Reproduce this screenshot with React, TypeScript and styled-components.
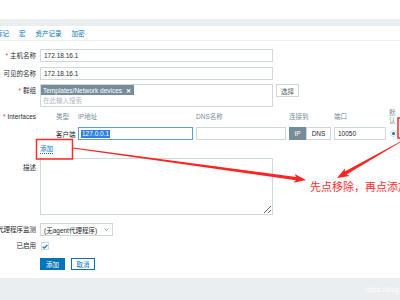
import React from "react";
import styled, { createGlobalStyle } from "styled-components";

const GlobalStyle = createGlobalStyle`
  html, body {
    margin: 0;
    padding: 0;
    background: #fff;
  }
  body {
    font-family: "Liberation Sans", "Noto Sans CJK SC", sans-serif;
    font-size: 6.5px;
    color: #1f2c33;
  }
`;

const Page = styled.div`
  position: relative;
  width: 400px;
  height: 300px;
  overflow: hidden;
  display: flex;
  flex-direction: column;
`;

const TopSpace = styled.div`
  height: 19px;
  flex-shrink: 0;
`;

const Band = styled.div`
  height: 7px;
  background: #ebeef0;
  flex-shrink: 0;
`;

const Tabs = styled.div`
  display: flex;
  align-items: center;
  gap: 10px;
  height: 15px;
  box-sizing: border-box;
  border-bottom: 1px solid #ebeef0;
  margin-left: -4px;
  flex-shrink: 0;
`;

const Tab = styled.span`
  color: #0275b8;
  white-space: nowrap;
`;

const Form = styled.div`
  display: flex;
  flex-direction: column;
  padding-top: 8px;
  margin-left: -24px;
  flex-shrink: 0;
`;

const Row = styled.div<{ $top?: number }>`
  display: grid;
  grid-template-columns: 60px auto;
  column-gap: 4px;
  align-items: start;
  margin-top: ${(p) => p.$top ?? 0}px;
`;

const Label = styled.div<{ $lh?: number; $pad?: number }>`
  text-align: right;
  white-space: nowrap;
  line-height: ${(p) => p.$lh ?? 13}px;
  padding-top: ${(p) => p.$pad ?? 0}px;
`;

const Req = styled.span`
  color: #e33734;
  margin-right: 2px;
`;

const TextField = styled.div<{ $w: number; $focus?: boolean }>`
  width: ${(p) => p.$w}px;
  height: 13px;
  box-sizing: border-box;
  border: 1px solid ${(p) => (p.$focus ? "#5c9fd6" : "#cfd8dc")};
  padding: 0 3px;
  display: flex;
  align-items: center;
  background: #fff;
  white-space: nowrap;
  overflow: hidden;
`;

const Selected = styled.span`
  background: #2f80e3;
  color: #fff;
  line-height: 8px;
  padding: 0 1px;
  margin-left: -1px;
`;

const GroupLine = styled.div`
  display: flex;
  align-items: flex-start;
  gap: 3px;
`;

const MultiSelect = styled.div`
  width: 233px;
  height: 23px;
  box-sizing: border-box;
  border: 1px solid #cfd8dc;
  display: flex;
  flex-direction: column;
  align-items: flex-start;
`;

const TagChip = styled.span`
  display: inline-flex;
  align-items: center;
  gap: 4px;
  height: 10px;
  padding: 0 3px 0 2px;
  background: #768d99;
  color: #fff;
  white-space: nowrap;
`;

const TagClose = styled.span`
  font-size: 6px;
  font-weight: bold;
`;

const Placeholder = styled.span`
  color: #acbbc2;
  line-height: 10px;
  padding-left: 2px;
  margin-top: 1px;
`;

const GreyButton = styled.div`
  width: 23px;
  height: 13px;
  box-sizing: border-box;
  border: 1px solid #cfd8dc;
  color: #4f5f67;
  display: flex;
  align-items: center;
  justify-content: center;
`;

const IfaceBlock = styled.div`
  display: flex;
  flex-direction: column;
  align-items: flex-start;
`;

const IfaceGrid = styled.div`
  display: grid;
  grid-template-columns: 13px 19px 115px 90px 42px 52px 10px;
  grid-template-rows: 16px 13px;
  column-gap: 3px;
  row-gap: 2px;
  align-items: center;
`;

const Head = styled.div`
  color: #768d99;
  line-height: 8px;
  white-space: normal;
`;

const TypeCell = styled.div`
  text-align: right;
  white-space: nowrap;
`;

const Toggle = styled.div`
  display: flex;
  height: 13px;
`;

const ToggleItem = styled.div<{ $on?: boolean; $w: number }>`
  width: ${(p) => p.$w}px;
  box-sizing: border-box;
  border: 1px solid ${(p) => (p.$on ? "#768d99" : "#cfd8dc")};
  background: ${(p) => (p.$on ? "#768d99" : "#fff")};
  color: ${(p) => (p.$on ? "#fff" : "#1f2c33")};
  display: flex;
  align-items: center;
  justify-content: center;
`;

const Radio = styled.div`
  width: 7px;
  height: 7px;
  box-sizing: border-box;
  border-radius: 50%;
  border: 1px solid #cfd8dc;
  display: flex;
  align-items: center;
  justify-content: center;
  margin-left: 1px;

  &::after {
    content: "";
    width: 3px;
    height: 3px;
    border-radius: 50%;
    background: #0275b8;
  }
`;

const AddLink = styled.span`
  color: #0275b8;
  line-height: 8px;
  margin-top: 5px;
  border-bottom: 1px dotted #0275b8;
`;

const TextArea = styled.textarea`
  width: 233px;
  height: 57px;
  box-sizing: border-box;
  border: 1px solid #cfd8dc;
  margin: 0;
  padding: 2px;
  resize: vertical;
  font: inherit;
  outline: none;
  display: block;
`;

const SelectBox = styled.div`
  width: 73px;
  height: 13px;
  box-sizing: border-box;
  border: 1px solid #cfd8dc;
  display: flex;
  align-items: center;
  justify-content: space-between;
  padding: 0 3px;
  white-space: nowrap;
`;

const CheckBox = styled.div`
  width: 8px;
  height: 8px;
  box-sizing: border-box;
  border: 1px solid #cfd8dc;
  margin-left: 1px;
  display: flex;
  align-items: center;
  justify-content: center;
`;

const Buttons = styled.div`
  display: flex;
  gap: 6px;
`;

const Button = styled.div<{ $primary?: boolean; $w: number }>`
  width: ${(p) => p.$w}px;
  height: 12px;
  box-sizing: border-box;
  border: 1px solid #0275b8;
  background: ${(p) => (p.$primary ? "#0275b8" : "#fff")};
  color: ${(p) => (p.$primary ? "#fff" : "#0275b8")};
  display: flex;
  align-items: center;
  justify-content: center;
`;

const Footer = styled.div`
  margin-top: 8px;
  flex: 1;
  background: #ebeef0;
  display: flex;
  align-items: center;
  padding-left: 365px;
`;

const Watermark = styled.span`
  color: rgba(255, 255, 255, 0.85);
  font-size: 7px;
  white-space: nowrap;
`;

const Overlay = styled.svg`
  position: absolute;
  left: 0;
  top: 0;
  pointer-events: none;
`;

const Note = styled.span`
  position: absolute;
  left: 310px;
  top: 180px;
  font-family: "Noto Sans CJK SC", sans-serif;
  font-size: 11px;
  line-height: 13px;
  color: #ff2e2e;
  white-space: nowrap;
`;

const arrow = (
  x1: number,
  y1: number,
  x2: number,
  y2: number,
  w0: number,
  w1: number,
  hl: number,
  hw: number
) => {
  const L = Math.hypot(x2 - x1, y2 - y1);
  const dx = (x2 - x1) / L;
  const dy = (y2 - y1) / L;
  const nx = -dy;
  const ny = dx;
  const bx = x2 - dx * hl;
  const by = y2 - dy * hl;
  const pts = [
    [x1 + (nx * w0) / 2, y1 + (ny * w0) / 2],
    [bx + dx * 2 + (nx * w1) / 2, by + dy * 2 + (ny * w1) / 2],
    [bx + (nx * hw) / 2, by + (ny * hw) / 2],
    [x2, y2],
    [bx - (nx * hw) / 2, by - (ny * hw) / 2],
    [bx + dx * 2 - (nx * w1) / 2, by + dy * 2 - (ny * w1) / 2],
    [x1 - (nx * w0) / 2, y1 - (ny * w0) / 2],
  ];
  return pts.map((p) => p.map((v) => v.toFixed(1)).join(",")).join(" ");
};

export default function App() {
  return (
    <>
      <GlobalStyle />
      <Page>
        <TopSpace />
        <Band />
        <Tabs>
          <Tab>标记</Tab>
          <Tab>宏</Tab>
          <Tab>资产记录</Tab>
          <Tab>加密</Tab>
        </Tabs>

        <Form>
          <Row>
            <Label>
              <Req>*</Req>主机名称
            </Label>
            <TextField $w={233}>172.18.16.1</TextField>
          </Row>

          <Row $top={5}>
            <Label>可见的名称</Label>
            <TextField $w={233}>172.18.16.1</TextField>
          </Row>

          <Row $top={4}>
            <Label>
              <Req>*</Req>群组
            </Label>
            <GroupLine>
              <MultiSelect>
                <TagChip>
                  Templates/Network devices<TagClose>✕</TagClose>
                </TagChip>
                <Placeholder>在此输入搜索</Placeholder>
              </MultiSelect>
              <GreyButton>选择</GreyButton>
            </GroupLine>
          </Row>

          <Row $top={2}>
            <Label $lh={16}>
              <Req>*</Req>Interfaces
            </Label>
            <IfaceBlock>
              <IfaceGrid>
                <span />
                <Head>类型</Head>
                <Head>IP地址</Head>
                <Head>DNS名称</Head>
                <Head>连接到</Head>
                <Head>端口</Head>
                <Head>默认</Head>

                <span />
                <TypeCell>客户端</TypeCell>
                <TextField $w={115} $focus>
                  <Selected>127.0.0.1</Selected>
                </TextField>
                <TextField $w={90} />
                <Toggle>
                  <ToggleItem $on $w={17}>
                    IP
                  </ToggleItem>
                  <ToggleItem $w={25}>DNS</ToggleItem>
                </Toggle>
                <TextField $w={52}>10050</TextField>
                <Radio />
              </IfaceGrid>
              <AddLink>添加</AddLink>
            </IfaceBlock>
          </Row>

          <Row $top={4}>
            <Label $pad={3}>描述</Label>
            <TextArea readOnly />
          </Row>

          <Row $top={8}>
            <Label>代理程序监测</Label>
            <SelectBox>
              (无agent代理程序)
              <svg width="5" height="3" viewBox="0 0 5 3">
                <path d="M0.5 0.5 L2.5 2.5 L4.5 0.5" fill="none" stroke="#768d99" strokeWidth="0.8" />
              </svg>
            </SelectBox>
          </Row>

          <Row $top={6}>
            <Label $lh={8}>已启用</Label>
            <CheckBox>
              <svg width="6" height="5" viewBox="0 0 6 5">
                <path d="M0.6 2.6 L2.3 4.2 L5.4 0.8" fill="none" stroke="#0275b8" strokeWidth="1.1" />
              </svg>
            </CheckBox>
          </Row>

          <Row $top={8}>
            <span />
            <Buttons>
              <Button $primary $w={25}>
                添加
              </Button>
              <Button $w={24}>取消</Button>
            </Buttons>
          </Row>
        </Form>

        <Footer>
          <Watermark>https://blog.csdn.net/</Watermark>
        </Footer>

        <Overlay width="400" height="300" viewBox="0 0 400 300">
          <rect x="36.5" y="139.5" width="36" height="19.5" fill="none" stroke="#ff2a2a" strokeWidth="1.5" />
          <rect x="398" y="118" width="20" height="20" fill="none" stroke="#ff2a2a" strokeWidth="1.5" />
          <polygon points={arrow(73, 148, 306, 180, 0.8, 3.4, 12, 9)} fill="#ff2323" />
          <polygon points={arrow(402, 141, 337, 178, 0.8, 3.4, 12, 9)} fill="#ff2323" />
        </Overlay>
        <Note>先点移除，再点添加</Note>
      </Page>
    </>
  );
}
